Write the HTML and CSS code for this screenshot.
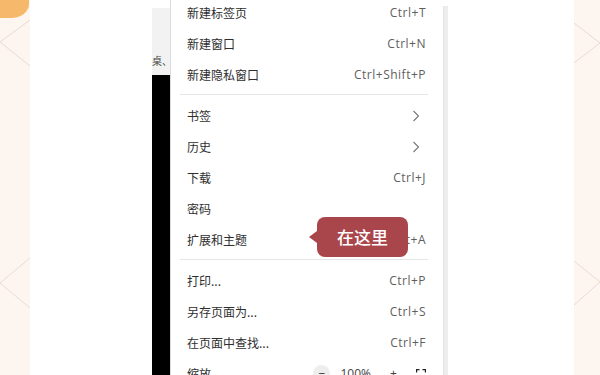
FILE: index.html
```html
<!DOCTYPE html>
<html lang="zh-CN">
<head>
<meta charset="utf-8">
<link rel="stylesheet" href="styles.css">
</head>
<body>
<div class="page">
  <div class="band band-left">
    <div class="blob"></div>
    <svg class="deco" width="30" height="375" viewBox="0 0 30 375">
      <polyline points="30,20 0,42 30,66" />
      <polyline points="30,258 0,283 30,308" />
    </svg>
  </div>
  <div class="gap-left"></div>
  <div class="strip">
    <div class="strip-top"></div>
    <div class="strip-gray">桌、</div>
    <div class="strip-black"></div>
  </div>
  <div class="menu">
    <div class="item"><span class="label">新建标签页</span><span class="key">Ctrl+T</span></div>
    <div class="item"><span class="label">新建窗口</span><span class="key">Ctrl+N</span></div>
    <div class="item"><span class="label">新建隐私窗口</span><span class="key">Ctrl+Shift+P</span></div>
    <div class="sep"></div>
    <div class="item"><span class="label">书签</span><svg class="chev" width="8" height="12" viewBox="0 0 8 12"><polyline points="1.5,1 6.5,6 1.5,11"/></svg></div>
    <div class="item"><span class="label">历史</span><svg class="chev" width="8" height="12" viewBox="0 0 8 12"><polyline points="1.5,1 6.5,6 1.5,11"/></svg></div>
    <div class="item"><span class="label">下载</span><span class="key">Ctrl+J</span></div>
    <div class="item"><span class="label">密码</span></div>
    <div class="item item-tip"><span class="label">扩展和主题</span><span class="key">Ctrl+Shift+A</span>
      <div class="tip">在这里</div>
    </div>
    <div class="sep"></div>
    <div class="item"><span class="label">打印...</span><span class="key">Ctrl+P</span></div>
    <div class="item"><span class="label">另存页面为...</span><span class="key">Ctrl+S</span></div>
    <div class="item"><span class="label">在页面中查找...</span><span class="key">Ctrl+F</span></div>
    <div class="item"><span class="label">缩放</span>
      <div class="zoomctl">
        <span class="zbtn">−</span>
        <span class="zval">100%</span>
        <span class="zbtn zplus">+</span>
        <svg class="fs" width="10" height="10" viewBox="0 0 10 10"><path d="M0.5 3.5V0.5H3.5M6.5 0.5H9.5V3.5M9.5 6.5V9.5H6.5M3.5 9.5H0.5V6.5"/></svg>
      </div>
    </div>
  </div>
  <div class="scroll"></div>
  <div class="gap-right"></div>
  <div class="band band-right">
    <svg class="deco" width="26" height="375" viewBox="0 0 26 375">
      <polyline points="0,23 26,43 0,63" />
      <polyline points="0,261 26,282 0,305" />
    </svg>
  </div>
</div>
</body>
</html>
```

FILE: styles.css
```css
html, body {
  margin: 0;
  padding: 0;
  background: #ffffff;
}
.page {
  width: 600px;
  height: 375px;
  overflow: hidden;
  display: flex;
  font-family: "Noto Sans", "Noto Sans CJK SC", sans-serif;
}
.band {
  background: #fdf5ef;
  position: relative;
  overflow: hidden;
}
.band-left { width: 30px; }
.band-right { width: 26px; }
.deco {
  position: absolute;
  left: 0;
  top: 0;
}
.deco polyline {
  fill: none;
  stroke: #e9dbd3;
  stroke-width: 1;
}
.blob {
  position: absolute;
  left: 0;
  top: 0;
  width: 29px;
  height: 18px;
  background: #f6b96b;
  border-bottom-right-radius: 18px 14px;
  z-index: 1;
}
.gap-left { width: 122px; }
.gap-right { width: 126px; }
.strip {
  width: 18px;
  display: flex;
  flex-direction: column;
}
.strip-top { height: 8px; }
.strip-gray {
  height: 67px;
  background: #f2f2f2;
  box-sizing: border-box;
  padding-top: 46px;
  font-size: 10px;
  line-height: 13px;
  color: #444;
  font-family: "Noto Sans CJK SC", sans-serif;
  white-space: nowrap;
  overflow: hidden;
}
.strip-black {
  flex: 1;
  background: #000;
}
.menu {
  width: 273px;
  box-sizing: border-box;
  border-left: 1px solid #dcdcdc;
  margin-top: -3px;
  background: #fff;
}
.item {
  height: 31px;
  display: flex;
  align-items: center;
  padding: 0 17px 0 16px;
  font-size: 12px;
  color: #2e2e2e;
}
.item .label {
  flex: 1;
  font-family: "Noto Sans CJK SC", sans-serif;
}
.key {
  color: #5e5e5e;
  font-size: 12px;
  letter-spacing: 0.5px;
  font-family: "Open Sans", "Noto Sans", sans-serif;
}
.chev {
  margin-right: 6px;
}
.chev polyline {
  fill: none;
  stroke: #777;
  stroke-width: 1.1;
}
.sep {
  height: 1px;
  background: #e6e6e6;
  margin: 4px 15px 5px 9px;
}
.item-tip {
  position: relative;
}
.tip {
  position: absolute;
  left: 146px;
  top: -7px;
  width: 91px;
  height: 40px;
  border-radius: 8px;
  background: #a9464b;
  color: #fff;
  font-size: 17px;
  font-weight: 500;
  line-height: 40px;
  letter-spacing: 0;
  text-align: center;
  font-family: "Noto Sans CJK SC", sans-serif;
}
.tip::before {
  content: "";
  position: absolute;
  left: -8px;
  top: 14px;
  border-style: solid;
  border-width: 6px 8px 6px 0;
  border-color: transparent #a9464b transparent transparent;
}
.zoomctl {
  display: flex;
  align-items: center;
}
.zbtn {
  width: 17px;
  height: 17px;
  border-radius: 50%;
  background: #eeeeee;
  color: #444;
  font-size: 12px;
  line-height: 17px;
  text-align: center;
}
.zplus {
  background: transparent;
  margin-left: 14px;
}
.zval {
  margin-left: 10px;
  color: #444;
  font-size: 12px;
  font-family: "Open Sans", "Noto Sans", sans-serif;
}
.fs {
  margin-left: 14px;
}
.fs path {
  fill: none;
  stroke: #222;
  stroke-width: 1.4;
}
.scroll {
  width: 5px;
  margin-top: 6px;
  background: #ededed;
  border-left: 1px solid #e2e2e2;
  box-sizing: border-box;
}
```
